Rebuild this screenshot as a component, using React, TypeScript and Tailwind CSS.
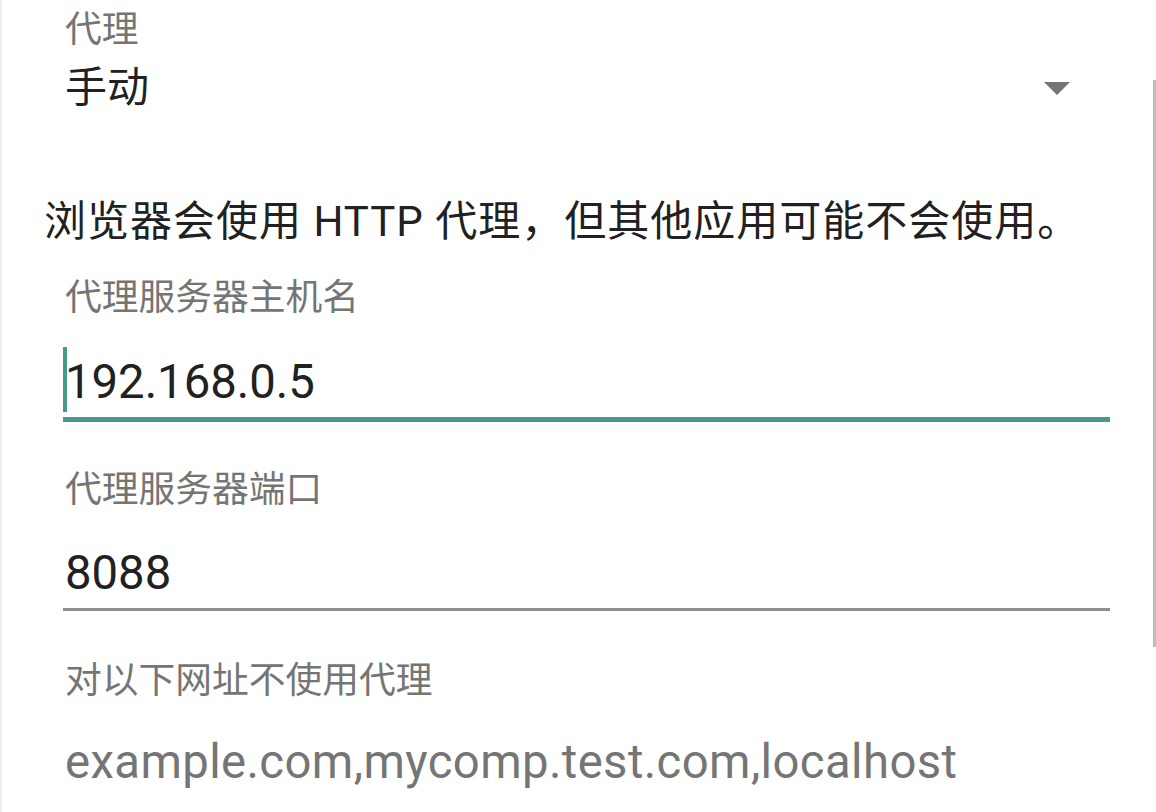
const font = { fontFamily: 'Roboto, "Noto Sans CJK SC", sans-serif' };

function Label({ text, className }: { text: string; className?: string }) {
  return (
    <div className={`h-[52px] leading-[52px] text-[36.75px] text-[#757575] ${className ?? ''}`}>{text}</div>
  );
}

export default function App() {
  return (
    <div
      className="relative h-[812px] w-[1156px] overflow-hidden border-l-2 border-[#eeeeee] bg-white"
      style={font}
    >
      <div className="pl-[42px] pr-[46px]">
        {/* spinner */}
        <div className="pl-[21px]">
          <div className="h-[60px] leading-[60px] text-[36.75px] text-[#757575]">代理</div>
          <div className="flex h-[56px] items-center justify-between">
            <span className="text-[42px] leading-[56px] text-[#212121]">手动</span>
            <svg width="26" height="13" viewBox="0 0 26 13" className="mr-[40px]">
              <path d="M0 0 L26 0 L13 13 Z" fill="#757575" />
            </svg>
          </div>
        </div>

        <div className="mt-[80px] h-[52px] whitespace-nowrap text-[42px] leading-[52px] tracking-[1px] text-[#212121]">
          浏览器会使用 HTTP 代理，但其他应用可能不会使用。
        </div>

        <div className="pl-[21px]">
          <Label text="代理服务器主机名" className="mt-[24px]" />
          <div className="relative -ml-[2px] mt-[23px] border-b-[5px] border-[#459a89] pl-[2px]">
            <div className="h-[70px] text-[47.25px] leading-[70px] text-[#212121]">192.168.0.5</div>
            <span className="absolute left-[0px] top-[0px] h-[65px] w-[4px] bg-[#459a89]" />
          </div>

          <Label text="代理服务器端口" className="mt-[42px]" />
          <div className="-ml-[2px] mt-[23px] border-b-[3px] border-[#8e8e8e] pl-[2px]">
            <div className="h-[69px] text-[47.25px] leading-[69px] text-[#212121]">8088</div>
          </div>

          <Label text="对以下网址不使用代理" className="mt-[44px]" />
          <div className="mt-[20px]">
            <div className="h-[70px] whitespace-nowrap text-[47.25px] leading-[70px] tracking-[0.4px] text-[#757575]">
              example.com,mycomp.test.com,localhost
            </div>
          </div>
        </div>
      </div>

      <div className="absolute right-0 top-[80px] h-[567px] w-[3px] bg-[#bdbdbd]" />
    </div>
  );
}
